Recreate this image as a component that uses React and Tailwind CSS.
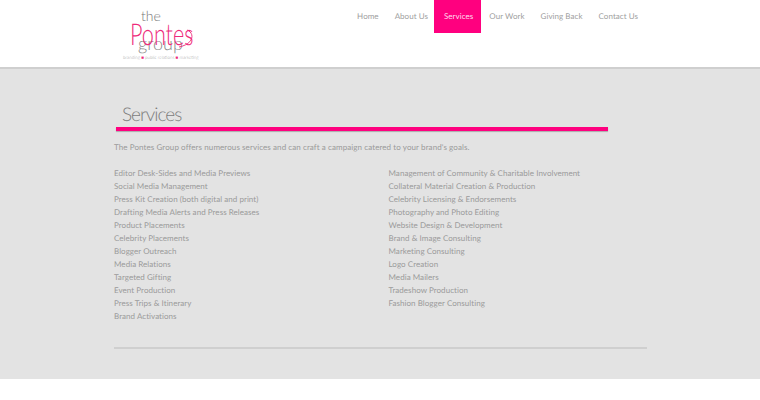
const NAV = ["Home", "About Us", "Services", "Our Work", "Giving Back", "Contact Us"];

const LEFT = [
    "Editor Desk-Sides and Media Previews",
    "Social Media Management",
    "Press Kit Creation (both digital and print)",
    "Drafting Media Alerts and Press Releases",
    "Product Placements",
    "Celebrity Placements",
    "Blogger Outreach",
    "Media Relations",
    "Targeted Gifting",
    "Event Production",
    "Press Trips & Itinerary",
    "Brand Activations",
];

const RIGHT = [
    "Management of Community & Charitable Involvement",
    "Collateral Material Creation & Production",
    "Celebrity Licensing & Endorsements",
    "Photography and Photo Editing",
    "Website Design & Development",
    "Brand & Image Consulting",
    "Marketing Consulting",
    "Logo Creation",
    "Media Mailers",
    "Tradeshow Production",
    "Fashion Blogger Consulting",
];

function Logo() {
    return (
        <div className="relative w-[80px] ml-[123px] pt-[9px] flex flex-col items-start font-['Lato',sans-serif] font-light tracking-normal">
            <div className="h-[14px] leading-[14px] text-[14px] text-[#777777] ml-[18px]">the</div>
            <div className="h-[22px] leading-[22px] text-[30px] text-[#ee2a7b] ml-[7px] whitespace-nowrap origin-left scale-x-[0.72]">Pontes</div>
            <div className="h-[10px] leading-[10px] text-[18px] text-[#888888] ml-[15px] mt-[-7px]">group</div>
            <div className="mt-[7px] text-[4.5px] leading-[6px] text-[#a0a0a0] whitespace-nowrap">
                branding <span className="text-[#ee2a7b]">■</span> public relations <span className="text-[#ee2a7b]">■</span> marketing
            </div>
            {/* tail of the s */}
            <svg className="absolute left-0 top-0" width="80" height="69" viewBox="0 0 80 69" fill="none">
                <path d="M64 30C72 33 71 44 56 47" stroke="#ee2a7b" strokeWidth="0.9" />
            </svg>
        </div>
    );
}

function ServiceList({ items, className }) {
    return (
        <ul className={className}>
            {items.map((s) => (
                <li key={s} className="h-[13px] leading-[13px] whitespace-nowrap">{s}</li>
            ))}
        </ul>
    );
}

export default function App() {
    return (
        <div className="w-[760px] h-[400px] bg-white overflow-hidden font-['Lato',sans-serif] text-[8px] tracking-[0.05px] [text-rendering:geometricPrecision]">
            {/* Header */}
            <header className="h-[69px] flex justify-between border-b-2 border-[#cfcfcf]">
                <Logo />
                <nav className="flex items-start mr-[114px] text-[#a0a0a0]">
                    {NAV.map((n) => (
                        <a
                            key={n}
                            className={`h-[33px] px-2 leading-[32px] whitespace-nowrap ${n === "Services" ? "ml-[-2px] pl-[10px] bg-[#ff007f] text-[#ffd9ec]" : ""}`}
                        >
                            {n}
                        </a>
                    ))}
                </nav>
            </header>

            {/* Content */}
            <main className="h-[310px] bg-[#e3e3e3] pl-[114px] text-[#9a9a9a]">
                <div className="w-[492px] ml-[2px] pt-[34px]">
                    <h1 className="h-[24px] leading-[24px] pl-[6px] text-[19px] font-light tracking-[-1px] text-[#7c7c7c]">Services</h1>
                    <div className="h-[4px] bg-[#ff007f] shadow-[0_1px_1px_#aaaaaa]" />
                </div>
                <p className="mt-[10px] h-[13px] leading-[13px] tracking-[0.09px]">
                    The Pontes Group offers numerous services and can craft a campaign catered to your brand's goals.
                </p>
                <div className="flex mt-[13px]">
                    <ServiceList items={LEFT} className="w-[274.5px]" />
                    <ServiceList items={RIGHT} />
                </div>
                <div className="w-[533px] h-[2px] mt-[24px] bg-[#cfcfcf]" />
            </main>
        </div>
    );
}
